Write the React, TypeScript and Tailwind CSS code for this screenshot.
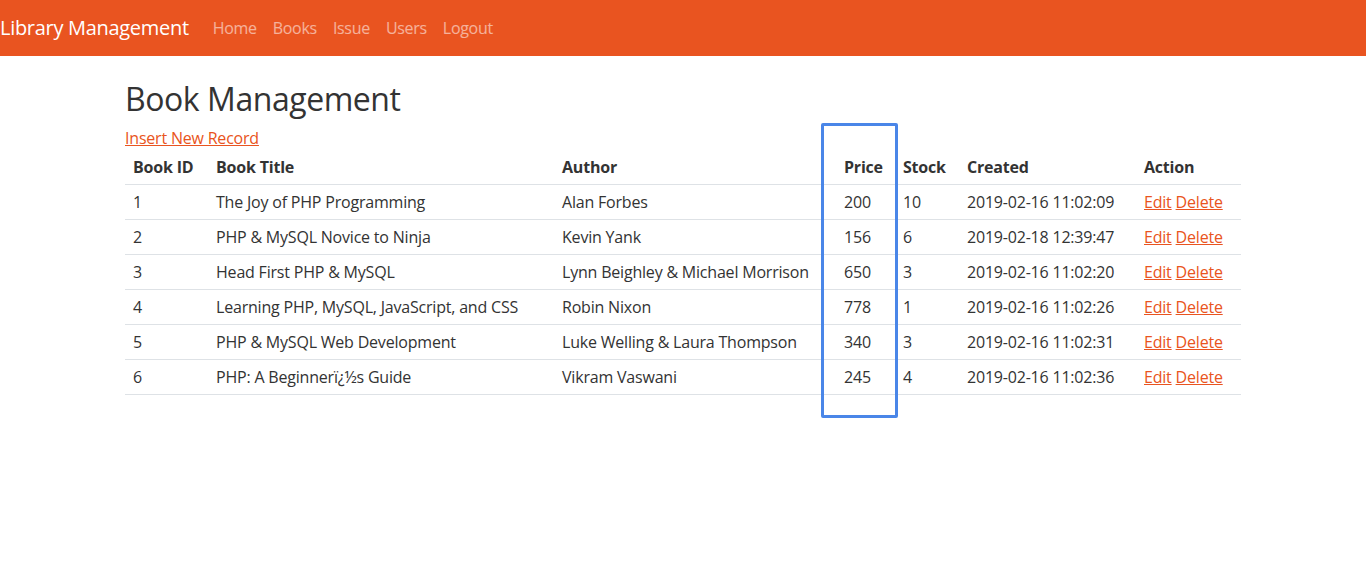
const books = [
  { id: 1, title: 'The Joy of PHP Programming', author: 'Alan Forbes', price: 200, stock: 10, created: '2019-02-16 11:02:09' },
  { id: 2, title: 'PHP & MySQL Novice to Ninja', author: 'Kevin Yank', price: 156, stock: 6, created: '2019-02-18 12:39:47' },
  { id: 3, title: 'Head First PHP & MySQL', author: 'Lynn Beighley & Michael Morrison', price: 650, stock: 3, created: '2019-02-16 11:02:20' },
  { id: 4, title: 'Learning PHP, MySQL, JavaScript, and CSS', author: 'Robin Nixon', price: 778, stock: 1, created: '2019-02-16 11:02:26' },
  { id: 5, title: 'PHP & MySQL Web Development', author: 'Luke Welling & Laura Thompson', price: 340, stock: 3, created: '2019-02-16 11:02:31' },
  { id: 6, title: 'PHP: A Beginnerï¿½s Guide', author: 'Vikram Vaswani', price: 245, stock: 4, created: '2019-02-16 11:02:36' },
];

const navLinks = ['Home', 'Books', 'Issue', 'Users', 'Logout'];

export default function App() {
  return (
    <div className="min-h-[568px] bg-white text-[#333] font-['Open_Sans',sans-serif]">
      <nav className="h-14 bg-[#e95420] flex items-center">
        <span className="text-xl text-white mr-4 tracking-[-0.3px]">Library Management</span>
        <ul className="flex">
          {navLinks.map((l) => (
            <li key={l} className="px-2 text-base text-white/55 tracking-[-0.3px]">{l}</li>
          ))}
        </ul>
      </nav>

      <div className="relative w-[1116px] mx-auto pt-6">
        <h2 className="text-[32px] leading-[1.2] font-normal mb-2 tracking-[-0.45px]">Book Management</h2>
        <a href="#" className="block w-fit text-base leading-6 text-[#e95420] underline tracking-[-0.2px]">Insert New Record</a>

        <table className="w-full table-fixed border-collapse text-base leading-6 tracking-[-0.2px]">
          <colgroup>
            <col className="w-[83px]" />
            <col className="w-[346px]" />
            <col className="w-[282px]" />
            <col className="w-[59px]" />
            <col className="w-[64px]" />
            <col className="w-[177px]" />
            <col className="w-[105px]" />
          </colgroup>
          <thead>
            <tr className="border-b border-[#dee2e6]">
              {['Book ID', 'Book Title', 'Author', 'Price', 'Stock', 'Created', 'Action'].map((h) => (
                <th key={h} className="px-2 py-[5px] text-left font-bold whitespace-nowrap">{h}</th>
              ))}
            </tr>
          </thead>
          <tbody>
            {books.map((b) => (
              <tr key={b.id} className="border-b border-[#dee2e6]">
                <td className="px-2 py-[5px]">{b.id}</td>
                <td className="px-2 py-[5px] whitespace-nowrap">{b.title}</td>
                <td className="px-2 py-[5px] whitespace-nowrap">{b.author}</td>
                <td className="px-2 py-[5px]">{b.price}</td>
                <td className="px-2 py-[5px]">{b.stock}</td>
                <td className="px-2 py-[5px] whitespace-nowrap">{b.created}</td>
                <td className="px-2 py-[5px] whitespace-nowrap">
                  <a href="#" className="text-[#e95420] underline">Edit</a>{' '}
                  <a href="#" className="text-[#e95420] underline">Delete</a>
                </td>
              </tr>
            ))}
          </tbody>
        </table>

        <div className="absolute left-[696px] top-[67px] w-[77px] h-[295px] border-[3px] border-[#4a86e8] rounded-[2px]" />
      </div>
    </div>
  );
}
